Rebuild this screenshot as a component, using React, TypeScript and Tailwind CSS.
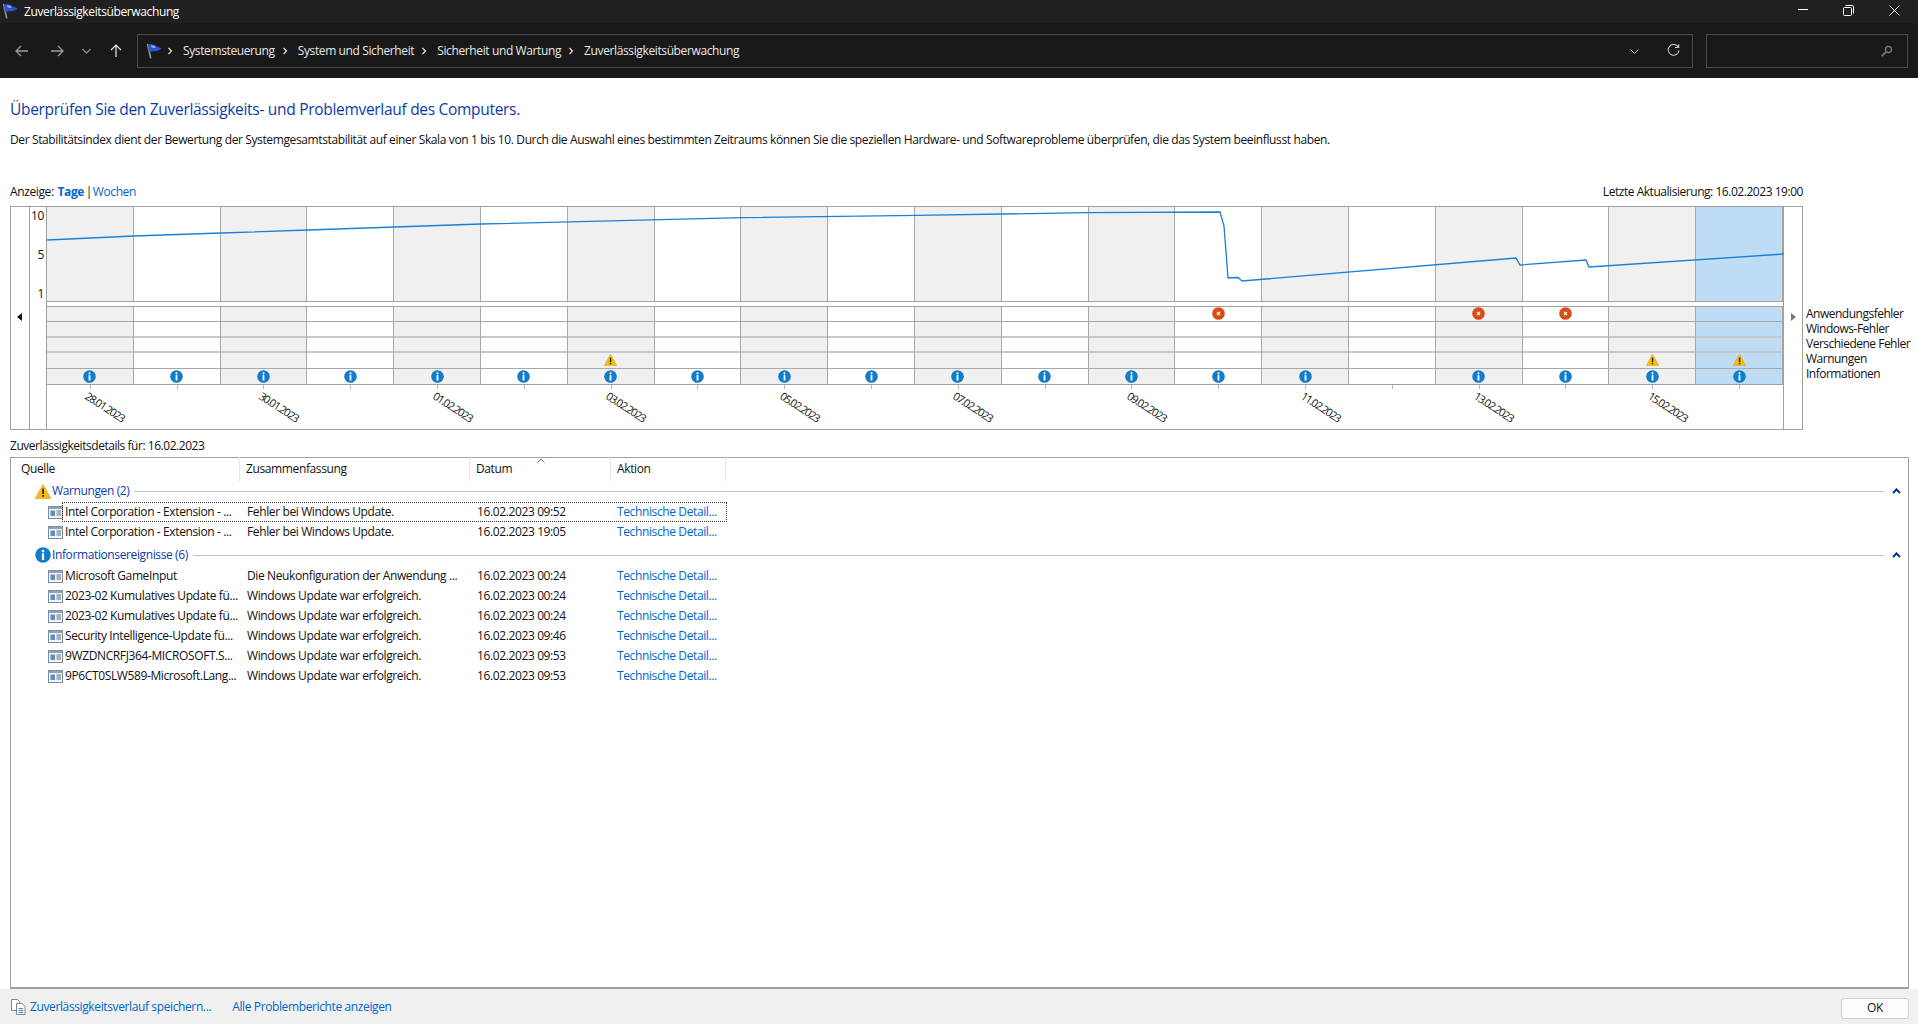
import React from "react";

const Flag = ({ size = 16 }: { size?: number }) => (
  <svg width={size} height={size} viewBox="0 0 16 16" className="shrink-0">
    <path d="M1.6 1 L4.8 15.4" stroke="#8a97a6" strokeWidth="1.6" />
    <path d="M2 1.4 C4.6 .2 6.6 1.6 9 2.4 L15.6 5.4 C13.4 8 10 7.8 7 8.2 C5.6 8.4 4.6 9 3.6 9.6 Z" fill="#2b50d2" />
    <path d="M5 1.8 L9 2.8 L9.6 5 L5.6 5 Z" fill="#7f9df2" />
  </svg>
);

const InfoIcon = ({ size = 13 }: { size?: number }) => (
  <svg width={size} height={size} viewBox="0 0 13 13" className="block">
    <circle cx="6.5" cy="6.5" r="6.3" fill="#0f7dcc" />
    <circle cx="6.5" cy="3.3" r="1.1" fill="#fff" />
    <rect x="5.6" y="5.1" width="1.8" height="5.4" fill="#fff" />
  </svg>
);

const WarnIcon = ({ w = 13, h = 12 }: { w?: number; h?: number }) => (
  <svg width={w} height={h} viewBox="0 0 13 12" className="block">
    <path d="M6.5 .4 L12.8 11.6 H.2 Z" fill="#f6bd16" stroke="#dd9a08" strokeWidth=".5" />
    <rect x="5.8" y="3.6" width="1.5" height="4.4" fill="#3a2c00" />
    <rect x="5.8" y="8.8" width="1.5" height="1.5" fill="#3a2c00" />
  </svg>
);

const ErrIcon = () => (
  <svg width="13" height="13" viewBox="0 0 13 13" className="-mt-[1px] block">
    <circle cx="6.5" cy="6.5" r="6.3" fill="#dc4a17" />
    <path d="M5 5 L8 8 M8 5 L5 8" stroke="#fff" strokeWidth="1.2" />
  </svg>
);

const ListIcon = () => (
  <svg width="15" height="13" viewBox="0 0 15 13" className="block shrink-0">
    <rect x=".5" y=".5" width="14" height="12" fill="#f4f6fa" stroke="#7f8c9c" />
    <rect x="1" y="1" width="13" height="2" fill="#8fa2b8" />
    <rect x="2.5" y="4.5" width="4.5" height="5.5" fill="#5c8fc8" />
    <path d="M8.5 5h4.5M8.5 7h4.5M8.5 9h4.5" stroke="#5b6b80" />
  </svg>
);

const Chevron = () => (
  <svg width="6" height="8" viewBox="0 0 6 8" className="shrink-0">
    <path d="M1.5 1 L4.5 4 L1.5 7" fill="none" stroke="#e6e6e6" strokeWidth="1.2" />
  </svg>
);

const UpCaret = () => (
  <svg width="9" height="6" viewBox="0 0 9 6" className="block shrink-0">
    <path d="M1 5 L4.5 1.5 L8 5" fill="none" stroke="#003399" strokeWidth="2" />
  </svg>
);

const linePoints =
  "0,33 87,29 174,26 261,23 348,20 434,17 696,10.7 870,8.3 1040,5.7 1173,5 1177,19 1181,71 1191,70.5 1195,74 1469,51 1473,58 1539,53 1542,60 1737,47";

const days = Array.from({ length: 20 }, (_, i) => i);
const labels: Record<number, string> = {
  0: "28.01.2023",
  2: "30.01.2023",
  4: "01.02.2023",
  6: "03.02.2023",
  8: "05.02.2023",
  10: "07.02.2023",
  12: "09.02.2023",
  14: "11.02.2023",
  16: "13.02.2023",
  18: "15.02.2023",
};
const errors = [13, 16, 17];
const warnings = [6, 18, 19];

const colBg = (i: number) => (i === 19 ? "bg-[#bfdcf5]" : i % 2 === 0 ? "bg-[#f0f0f0]" : "bg-white");

const Chart = () => (
  <div className="ml-[10px] mt-[6px] flex h-[224px] w-[1793px] border border-[#a0a0a0]">
    <div className="flex h-full w-[19px] shrink-0 items-start border-r border-[#a0a0a0] pl-[6px] pt-[106px]">
      <svg width="6" height="8" viewBox="0 0 6 8"><path d="M5 0 V8 L0 4 Z" fill="#111" /></svg>
    </div>
    <div className="flex h-[95px] w-[16px] shrink-0 flex-col items-end justify-between pr-[2px] pt-[1px] text-right leading-[16px]">
      <span>10</span>
      <span>5</span>
      <span>1</span>
    </div>
    <div className="flex h-full min-w-0 flex-1 flex-col border-l border-[#a0a0a0]">
      <div className="relative h-[95px] shrink-0 border-b border-[#a0a0a0]">
        <div className="grid h-full grid-cols-[repeat(20,1fr)]">
          {days.map((i) => (
            <div key={i} className={`h-full border-r border-[#a8a8a8] ${colBg(i)}`} />
          ))}
        </div>
        <svg className="absolute inset-0" width="1738" height="94" viewBox="0 0 1738 94" fill="none">
          <polyline points={linePoints} stroke="#1a80d4" strokeWidth="1.3" />
        </svg>
      </div>
      <div className="mt-[4px] h-[79px] shrink-0 border-y border-[#a0a0a0]">
        <div className="grid h-full grid-cols-[repeat(20,1fr)]">
          {days.map((i) => (
            <div key={i} className={`grid h-full grid-rows-5 border-r border-[#a8a8a8] ${colBg(i)}`}>
              <div className="flex items-center justify-center border-b border-[#a8a8a8]">
                {errors.includes(i) && <ErrIcon />}
              </div>
              <div className="border-b-2 border-[#c8c8c8]" />
              <div className="border-b-2 border-[#c8c8c8]" />
              <div className="flex items-center justify-center border-b border-[#a8a8a8]">
                {warnings.includes(i) && <WarnIcon />}
              </div>
              <div className="flex items-center justify-center">{i !== 15 && <InfoIcon />}</div>
            </div>
          ))}
        </div>
      </div>
      <div className="grid flex-1 grid-cols-[repeat(20,1fr)]">
        {days.map((i) => (
          <div key={i} className="relative flex justify-center">
            <div className="h-[4px] w-px bg-[#b8b8b8]" />
            {labels[i] && (
              <span className="absolute left-1/2 top-[4px] origin-top-left rotate-[33deg] whitespace-nowrap text-[11px] leading-[13px] tracking-[-1.15px] text-[#111]">
                {labels[i]}
              </span>
            )}
          </div>
        ))}
      </div>
    </div>
    <div className="flex h-full w-[19px] shrink-0 items-start border-l border-[#a0a0a0] pl-[7px] pt-[106px]">
      <svg width="6" height="8" viewBox="0 0 6 8"><path d="M0 0 V8 L5 4 Z" fill="#777" /></svg>
    </div>
  </div>
);

const Legend = () => (
  <div className="ml-[3px] mt-[106px] flex flex-col whitespace-nowrap leading-[15px] tracking-[-0.5px]">
    <span>Anwendungsfehler</span>
    <span>Windows-Fehler</span>
    <span>Verschiedene Fehler</span>
    <span>Warnungen</span>
    <span>Informationen</span>
  </div>
);

type Row = [string, string, string];
const warnRows: Row[] = [
  ["Intel Corporation - Extension - ...", "Fehler bei Windows Update.", "16.02.2023 09:52"],
  ["Intel Corporation - Extension - ...", "Fehler bei Windows Update.", "16.02.2023 19:05"],
];
const infoRows: Row[] = [
  ["Microsoft GameInput", "Die Neukonfiguration der Anwendung ...", "16.02.2023 00:24"],
  ["2023-02 Kumulatives Update fü...", "Windows Update war erfolgreich.", "16.02.2023 00:24"],
  ["2023-02 Kumulatives Update fü...", "Windows Update war erfolgreich.", "16.02.2023 00:24"],
  ["Security Intelligence-Update fü...", "Windows Update war erfolgreich.", "16.02.2023 09:46"],
  ["9WZDNCRFJ364-MICROSOFT.S...", "Windows Update war erfolgreich.", "16.02.2023 09:53"],
  ["9P6CT0SLW589-Microsoft.Lang...", "Windows Update war erfolgreich.", "16.02.2023 09:53"],
];

const DataRow = ({ row, focus }: { row: Row; focus?: boolean }) => (
  <div className="flex h-[20px] items-center whitespace-nowrap pl-[37px]">
    <ListIcon />
    <div className={`flex h-[18px] w-[663px] shrink-0 items-center ${focus ? "outline-1 outline-dotted outline-[#333]" : ""}`}>
      <span className="w-[184px] shrink-0 pl-[2px]">{row[0]}</span>
      <span className="w-[230px] shrink-0">{row[1]}</span>
      <span className="w-[140px] shrink-0">{row[2]}</span>
      <span className="text-[#0066cc]">Technische Detail...</span>
    </div>
  </div>
);

const Group = ({ icon, title }: { icon: React.ReactNode; title: string }) => (
  <div className="flex h-[20px] items-center pl-[23px] pr-[7px]">
    <div className="flex w-[17px] shrink-0 justify-center">{icon}</div>
    <span className="ml-[1px] whitespace-nowrap text-[#0a3ca8]">{title}</span>
    <div className="ml-[5px] mr-[8px] h-px flex-1 bg-[#b4c2e6]" />
    <UpCaret />
  </div>
);

const Header = ({ w, children }: { w: string; children: React.ReactNode }) => (
  <div className={`-mt-[1px] flex h-[24px] items-center border-r border-[#e6e6e6] ${w}`}>{children}</div>
);

export default function App() {
  return (
    <div className="flex h-[1024px] w-[1918px] flex-col overflow-hidden bg-white font-['Open_Sans','Liberation_Sans',sans-serif] text-[12px] tracking-[-0.38px] text-[#111]">
      <div className="flex h-[23px] shrink-0 items-center bg-[#202020] text-white">
        <div className="-mt-[1px] ml-[2px]"><Flag size={16} /></div>
        <span className="ml-[6px]">Zuverlässigkeitsüberwachung</span>
        <div className="flex-1" />
        <svg width="10" height="2" viewBox="0 0 10 2" className="-mt-[3px]"><rect width="10" height="1" fill="#fff" /></svg>
        <svg width="11" height="11" viewBox="0 0 11 11" className="-mt-[3px] ml-[35px]" fill="none" stroke="#fff">
          <rect x=".5" y="2.5" width="8" height="8" rx="1" /><path d="M2.5 .5 H9.5 Q10.5 .5 10.5 1.5 V8.5" />
        </svg>
        <svg width="11" height="11" viewBox="0 0 11 11" className="-mt-[3px] ml-[35px] mr-[18px]" stroke="#fff" strokeWidth="1"><path d="M.5 .5 L10.5 10.5 M10.5 .5 L.5 10.5" /></svg>
      </div>

      <div className="flex h-[55px] shrink-0 items-center bg-[#191919]">
        <svg width="14" height="12" viewBox="0 0 14 12" className="ml-[15px]" fill="none" stroke="#9a9a9a" strokeWidth="1.3"><path d="M13 6 H1 M6 1 L1 6 L6 11" /></svg>
        <svg width="14" height="12" viewBox="0 0 14 12" className="ml-[21px]" fill="none" stroke="#9a9a9a" strokeWidth="1.3"><path d="M1 6 H13 M8 1 L13 6 L8 11" /></svg>
        <svg width="9" height="6" viewBox="0 0 9 6" className="ml-[18px]" fill="none" stroke="#8a8a8a" strokeWidth="1.3"><path d="M.5 1 L4.5 5 L8.5 1" /></svg>
        <svg width="12" height="13" viewBox="0 0 12 13" className="ml-[19px]" fill="none" stroke="#e8e8e8" strokeWidth="1.2"><path d="M6 13 V1 M1 6 L6 1 L11 6" /></svg>
        <div className="ml-[15px] flex h-[34px] w-[1556px] items-center border border-[#4a4a4a] bg-[#191919] text-[#e8e8e8]">
          <div className="ml-[8px]"><Flag size={16} /></div>
          <div className="ml-[5px]"><Chevron /></div>
          <span className="ml-[10px]">Systemsteuerung</span>
          <div className="ml-[7px]"><Chevron /></div>
          <span className="ml-[10px]">System und Sicherheit</span>
          <div className="ml-[7px]"><Chevron /></div>
          <span className="ml-[10px]">Sicherheit und Wartung</span>
          <div className="ml-[7px]"><Chevron /></div>
          <span className="ml-[10px]">Zuverlässigkeitsüberwachung</span>
          <div className="flex-1" />
          <svg width="9" height="5" viewBox="0 0 9 5" className="mt-[2px]" fill="none" stroke="#cfcfcf"><path d="M.5 .5 L4.5 4.5 L8.5 .5" /></svg>
          <svg width="13" height="13" viewBox="0 0 13 13" className="ml-[28px] mr-[12px]" fill="none" stroke="#c8c8c8" strokeWidth="1.1"><path d="M11.5 3.5 A5.4 5.4 0 1 0 12 6.5" /><path d="M8 3.5 H11.7 V.2" /></svg>
        </div>
        <div className="ml-[13px] flex h-[34px] w-[202px] items-center justify-end border border-[#4a4a4a] pr-[14px]">
          <svg width="12" height="12" viewBox="0 0 12 12" fill="none" stroke="#777" strokeWidth="1.4"><circle cx="7.5" cy="4.5" r="3" /><path d="M5.2 6.8 L.8 11.2" strokeWidth="1.8" /></svg>
        </div>
      </div>

      <div className="flex min-h-0 flex-1 flex-col">
        <h1 className="ml-[10px] mt-[21px] text-[15.5px] font-normal leading-[20px] tracking-[-0.3px] text-[#0a3ca8]">
          Überprüfen Sie den Zuverlässigkeits- und Problemverlauf des Computers.
        </h1>
        <p className="ml-[10px] mt-[13px] leading-[16px]">
          Der Stabilitätsindex dient der Bewertung der Systemgesamtstabilität auf einer Skala von 1 bis 10. Durch die Auswahl eines bestimmten Zeitraums können Sie die speziellen Hardware- und Softwareprobleme überprüfen, die das System beeinflusst haben.
        </p>
        <div className="mt-[36px] flex w-[1803px] justify-between pl-[10px] leading-[16px]">
          <div>
            Anzeige: <span className="ml-[1px] font-bold text-[#0066cc]">Tage</span> <span className="-ml-[1px]">|</span> <span className="-ml-[2px] text-[#0066cc]">Wochen</span>
          </div>
          <div className="tracking-[-0.46px]">Letzte Aktualisierung: 16.02.2023 19:00</div>
        </div>

        <div className="flex">
          <Chart />
          <Legend />
        </div>

        <div className="ml-[10px] mt-[8px] leading-[16px] tracking-[-0.46px]">Zuverlässigkeitsdetails für: 16.02.2023</div>

        <div className="ml-[10px] mr-[9px] mt-[3px] flex min-h-0 flex-1 flex-col border border-b-2 border-[#a0a0a0]">
          <div className="relative flex h-[23px] shrink-0">
            <Header w="w-[229px] pl-[10px]">Quelle</Header>
            <Header w="w-[230px] pl-[6px]">Zusammenfassung</Header>
            <Header w="w-[141px] pl-[6px]">Datum</Header>
            <Header w="w-[115px] pl-[6px]">Aktion</Header>
            <svg width="8" height="5" viewBox="0 0 8 5" fill="none" stroke="#777" className="absolute left-[526px] top-0"><path d="M.5 4.5 L4 1 L7.5 4.5" /></svg>
          </div>
          <Group icon={<WarnIcon w={16} h={15} />} title="Warnungen (2)" />
          <div className="mt-[1px]">
            {warnRows.map((r, i) => <DataRow key={i} row={r} focus={i === 0} />)}
          </div>
          <div className="mt-[3px]"><Group icon={<InfoIcon size={16} />} title="Informationsereignisse (6)" /></div>
          <div className="mt-[1px]">
            {infoRows.map((r, i) => <DataRow key={i} row={r} />)}
          </div>
        </div>
      </div>

      <div className="flex h-[35px] shrink-0 items-center bg-[#f0f0f0]">
        <svg width="15" height="16" viewBox="0 0 15 16" className="ml-[11px]" fill="#fff" stroke="#7a8696">
          <path d="M.5 .5 H6.5 L8.5 2.5 V11.5 H.5 Z" />
          <path d="M5.5 4.5 H11 L14 7.5 V15.5 H5.5 Z" />
          <path d="M7.5 9.5 H12 M7.5 11.5 H12 M7.5 13.5 H12" stroke="#4c86c8" />
        </svg>
        <span className="ml-[4px] text-[#0066cc]">Zuverlässigkeitsverlauf speichern...</span>
        <span className="ml-[21px] text-[#0066cc]">Alle Problemberichte anzeigen</span>
        <div className="flex-1" />
        <button className="mr-[9px] mt-[3px] h-[21px] w-[68px] rounded-[3px] border border-[#d0d0d0] bg-[#fdfdfd] text-[12px] text-[#111]">OK</button>
      </div>
    </div>
  );
}
